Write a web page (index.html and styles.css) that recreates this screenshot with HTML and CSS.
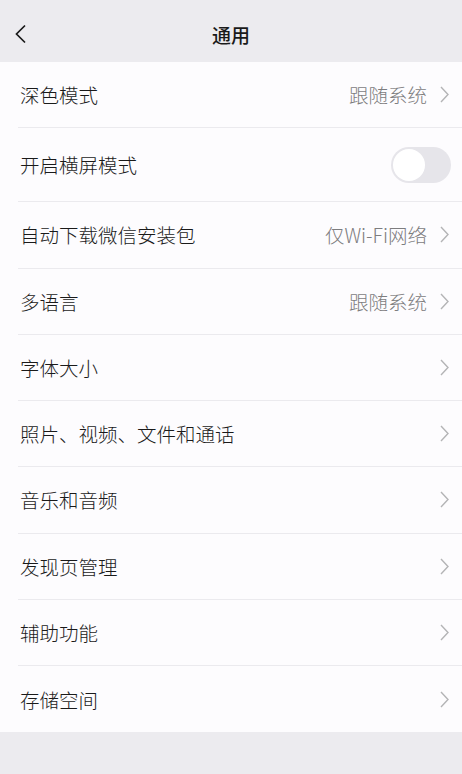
FILE: index.html
```html
<!DOCTYPE html>
<html lang="zh-CN">
<head>
    <meta charset="UTF-8">
    <meta name="viewport" content="width=device-width, initial-scale=1.0">
    <title>通用</title>

    <link rel="stylesheet" href="styles.css">
</head>
<body>

    <header class="nav-bar">
        <span class="back">
            <svg width="13" height="20" viewBox="0 0 13 20">
                <polyline points="11,1.5 2.5,10 11,18.5" fill="none" stroke="#1a1a1a" stroke-width="1.7"/>
            </svg>
        </span>
        <h1 class="title">通用</h1>
    </header>

    <ul class="settings">
        <li class="item">
            <span class="label">深色模式</span>
            <span class="value">跟随系统</span>
            <svg class="arrow" width="9" height="17" viewBox="0 0 9 17"><polyline points="1,1 8,8.5 1,16" fill="none" stroke="#b4b4b6" stroke-width="1.4"/></svg>
        </li>
        <li class="item item-tall">
            <span class="label">开启横屏模式</span>
            <span class="switch"></span>
        </li>
        <li class="item">
            <span class="label">自动下载微信安装包</span>
            <span class="value">仅Wi-Fi网络</span>
            <svg class="arrow" width="9" height="17" viewBox="0 0 9 17"><polyline points="1,1 8,8.5 1,16" fill="none" stroke="#b4b4b6" stroke-width="1.4"/></svg>
        </li>
        <li class="item">
            <span class="label">多语言</span>
            <span class="value">跟随系统</span>
            <svg class="arrow" width="9" height="17" viewBox="0 0 9 17"><polyline points="1,1 8,8.5 1,16" fill="none" stroke="#b4b4b6" stroke-width="1.4"/></svg>
        </li>
        <li class="item">
            <span class="label">字体大小</span>
            <svg class="arrow" width="9" height="17" viewBox="0 0 9 17"><polyline points="1,1 8,8.5 1,16" fill="none" stroke="#b4b4b6" stroke-width="1.4"/></svg>
        </li>
        <li class="item">
            <span class="label">照片、视频、文件和通话</span>
            <svg class="arrow" width="9" height="17" viewBox="0 0 9 17"><polyline points="1,1 8,8.5 1,16" fill="none" stroke="#b4b4b6" stroke-width="1.4"/></svg>
        </li>
        <li class="item">
            <span class="label">音乐和音频</span>
            <svg class="arrow" width="9" height="17" viewBox="0 0 9 17"><polyline points="1,1 8,8.5 1,16" fill="none" stroke="#b4b4b6" stroke-width="1.4"/></svg>
        </li>
        <li class="item">
            <span class="label">发现页管理</span>
            <svg class="arrow" width="9" height="17" viewBox="0 0 9 17"><polyline points="1,1 8,8.5 1,16" fill="none" stroke="#b4b4b6" stroke-width="1.4"/></svg>
        </li>
        <li class="item">
            <span class="label">辅助功能</span>
            <svg class="arrow" width="9" height="17" viewBox="0 0 9 17"><polyline points="1,1 8,8.5 1,16" fill="none" stroke="#b4b4b6" stroke-width="1.4"/></svg>
        </li>
        <li class="item">
            <span class="label">存储空间</span>
            <svg class="arrow" width="9" height="17" viewBox="0 0 9 17"><polyline points="1,1 8,8.5 1,16" fill="none" stroke="#b4b4b6" stroke-width="1.4"/></svg>
        </li>
    </ul>

</body>
</html>
```

FILE: styles.css
```css
body {
    margin: 0;
    background-color: #ecebef;
    font-family: "Noto Sans CJK SC", "Noto Sans", sans-serif;
    color: #1a1a1a;
}

.nav-bar {
    display: flex;
    justify-content: center;
    align-items: center;
    position: relative;
    height: 62px;
    padding-top: 6px;
    box-sizing: border-box;
    background-color: #ecebef;
}

.back {
    position: absolute;
    left: 14px;
    top: 24px;
    display: flex;
}

.title {
    margin: 0;
    font-size: 19px;
    font-weight: 500;
}

.settings {
    list-style: none;
    margin: 0;
    padding: 0;
    background-color: #fdfcfe;
}

.item {
    display: flex;
    align-items: center;
    height: 66.25px;
    margin-left: 18px;
    padding-left: 2px;
    padding-right: 13px;
    border-bottom: 1px solid #ebeaee;
    box-sizing: border-box;
    font-size: 19.5px;
    font-weight: 300;
}

.item:last-child {
    border-bottom: none;
}

.item-tall {
    height: 74px;
    padding-right: 11px;
}

.label {
    flex: 1;
}

.value {
    color: #7d7d7f;
    margin-right: 13px;
}

.arrow {
    display: block;
}

.switch {
    position: relative;
    width: 60px;
    height: 36px;
    border-radius: 18px;
    background-color: #e6e5ea;
}

.switch::after {
    content: "";
    position: absolute;
    left: 2px;
    top: 2px;
    width: 32px;
    height: 32px;
    border-radius: 50%;
    background-color: #ffffff;
}
```
